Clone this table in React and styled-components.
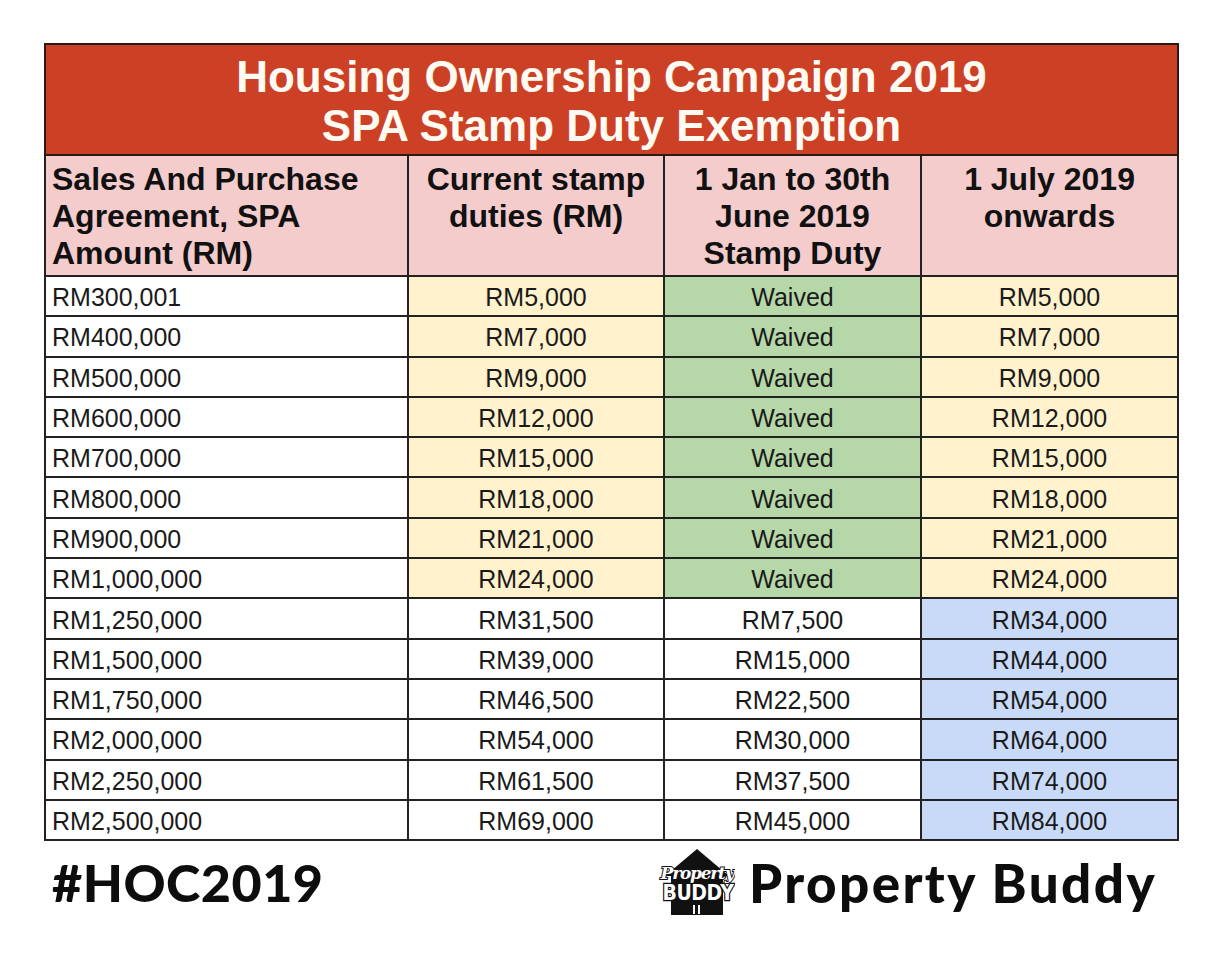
import React from "react";
import styled, { createGlobalStyle } from "styled-components";

const SANS = `"Liberation Sans", Arimo, Arial, Helvetica, sans-serif`;

const Global = createGlobalStyle`
  html, body { margin: 0; padding: 0; background: #ffffff; }
  body { font-family: ${SANS}; color: #111; }
`;

const Page = styled.div`
  width: 1222px;
  height: 960px;
  box-sizing: border-box;
  padding: 43px 0 0 44px;
  font-family: ${SANS};
`;

const Table = styled.table`
  width: 1133px;
  border-collapse: collapse;
  table-layout: fixed;
  font-family: ${SANS};
`;

const TitleCell = styled.th`
  background: #cc4125;
  color: #fffaf2;
  border: 2px solid #2a1a16;
  height: 107px;
  padding: 2px 0 0;
  font-family: ${SANS};
  font-size: 44px;
  line-height: 49px;
  font-weight: 700;
  text-align: center;
  vertical-align: middle;
`;

const HeadCell = styled.th`
  background: #f4cccc;
  border: 2px solid #222;
  height: 114px;
  padding: 5px ${(p) => (p.$left ? "6px" : "2px")} 0;
  font-family: ${SANS};
  font-size: 32px;
  line-height: 37px;
  font-weight: 700;
  color: #111;
  text-align: ${(p) => (p.$left ? "left" : "center")};
  vertical-align: top;
  white-space: nowrap;
`;

const Cell = styled.td`
  background: ${(p) => p.$bg || "#ffffff"};
  border: 2px solid #222;
  height: 36.3px;
  padding: 2px ${(p) => (p.$left ? "6px" : "4px")} 0;
  font-family: ${SANS};
  font-size: 25px;
  line-height: 36px;
  color: #1a1a1a;
  text-align: ${(p) => (p.$left ? "left" : "center")};
  vertical-align: middle;
  white-space: nowrap;
`;

const Footer = styled.div`
  width: 1133px;
  display: flex;
  align-items: center;
  justify-content: space-between;
  padding: 7px 20px 0 8px;
  box-sizing: border-box;
`;

const Hashtag = styled.div`
  font-family: "Lato", "Liberation Sans", sans-serif;
  font-weight: 900;
  font-size: 52px;
  letter-spacing: 0.5px;
  color: #0d0d0d;
`;

const Brand = styled.div`
  display: flex;
  align-items: center;
  gap: 14px;
`;

const BrandName = styled.div`
  font-family: "Lato", "Liberation Sans", sans-serif;
  font-weight: 900;
  font-size: 53px;
  letter-spacing: 2.4px;
  color: #0d0d0d;
`;

const Logo = () => (
  <svg width="76" height="68" viewBox="0 0 76 68">
    <polygon points="38,1 6,28 12,28 12,67 64,67 64,28 70,28" fill="#111" />
    <rect x="34" y="57" width="2" height="9" fill="#fff" />
    <rect x="39" y="57" width="2" height="9" fill="#fff" />
    <text
      x="38"
      y="31"
      textAnchor="middle"
      fontFamily="'DejaVu Serif', serif"
      fontStyle="italic"
      fontWeight="700"
      fontSize="17"
      fill="#fff"
      stroke="#111"
      strokeWidth="2"
      paintOrder="stroke"
      letterSpacing="-1.2"
    >
      Property
    </text>
    <text
      x="39"
      y="52"
      textAnchor="middle"
      fontFamily="'DejaVu Sans Condensed', 'DejaVu Sans', sans-serif"
      fontWeight="700"
      fontSize="21"
      fill="#fff"
      stroke="#111"
      strokeWidth="2.4"
      paintOrder="stroke"
      letterSpacing="-0.5"
    >
      BUDDY
    </text>
  </svg>
);

const Y = "#fff2cc";
const G = "#b6d7a8";
const B = "#c9daf8";

const rows = [
  ["RM300,001", "RM5,000", "Waived", "RM5,000", Y, G, Y],
  ["RM400,000", "RM7,000", "Waived", "RM7,000", Y, G, Y],
  ["RM500,000", "RM9,000", "Waived", "RM9,000", Y, G, Y],
  ["RM600,000", "RM12,000", "Waived", "RM12,000", Y, G, Y],
  ["RM700,000", "RM15,000", "Waived", "RM15,000", Y, G, Y],
  ["RM800,000", "RM18,000", "Waived", "RM18,000", Y, G, Y],
  ["RM900,000", "RM21,000", "Waived", "RM21,000", Y, G, Y],
  ["RM1,000,000", "RM24,000", "Waived", "RM24,000", Y, G, Y],
  ["RM1,250,000", "RM31,500", "RM7,500", "RM34,000", null, null, B],
  ["RM1,500,000", "RM39,000", "RM15,000", "RM44,000", null, null, B],
  ["RM1,750,000", "RM46,500", "RM22,500", "RM54,000", null, null, B],
  ["RM2,000,000", "RM54,000", "RM30,000", "RM64,000", null, null, B],
  ["RM2,250,000", "RM61,500", "RM37,500", "RM74,000", null, null, B],
  ["RM2,500,000", "RM69,000", "RM45,000", "RM84,000", null, null, B],
];

export default function App() {
  return (
    <Page>
      <Global />
      <Table>
        <colgroup>
          <col style={{ width: "363px" }} />
          <col style={{ width: "256px" }} />
          <col style={{ width: "257px" }} />
          <col style={{ width: "257px" }} />
        </colgroup>
        <thead>
          <tr>
            <TitleCell colSpan={4}>
              Housing Ownership Campaign 2019
              <br />
              SPA Stamp Duty Exemption
            </TitleCell>
          </tr>
          <tr>
            <HeadCell $left>
              Sales And Purchase
              <br />
              Agreement, SPA
              <br />
              Amount (RM)
            </HeadCell>
            <HeadCell>
              Current stamp
              <br />
              duties (RM)
            </HeadCell>
            <HeadCell>
              1 Jan to 30th
              <br />
              June 2019
              <br />
              Stamp Duty
            </HeadCell>
            <HeadCell>
              1 July 2019
              <br />
              onwards
            </HeadCell>
          </tr>
        </thead>
        <tbody>
          {rows.map((r) => (
            <tr key={r[0]}>
              <Cell $left>{r[0]}</Cell>
              <Cell $bg={r[4]}>{r[1]}</Cell>
              <Cell $bg={r[5]}>{r[2]}</Cell>
              <Cell $bg={r[6]}>{r[3]}</Cell>
            </tr>
          ))}
        </tbody>
      </Table>
      <Footer>
        <Hashtag>#HOC2019</Hashtag>
        <Brand>
          <Logo />
          <BrandName>Property Buddy</BrandName>
        </Brand>
      </Footer>
    </Page>
  );
}
